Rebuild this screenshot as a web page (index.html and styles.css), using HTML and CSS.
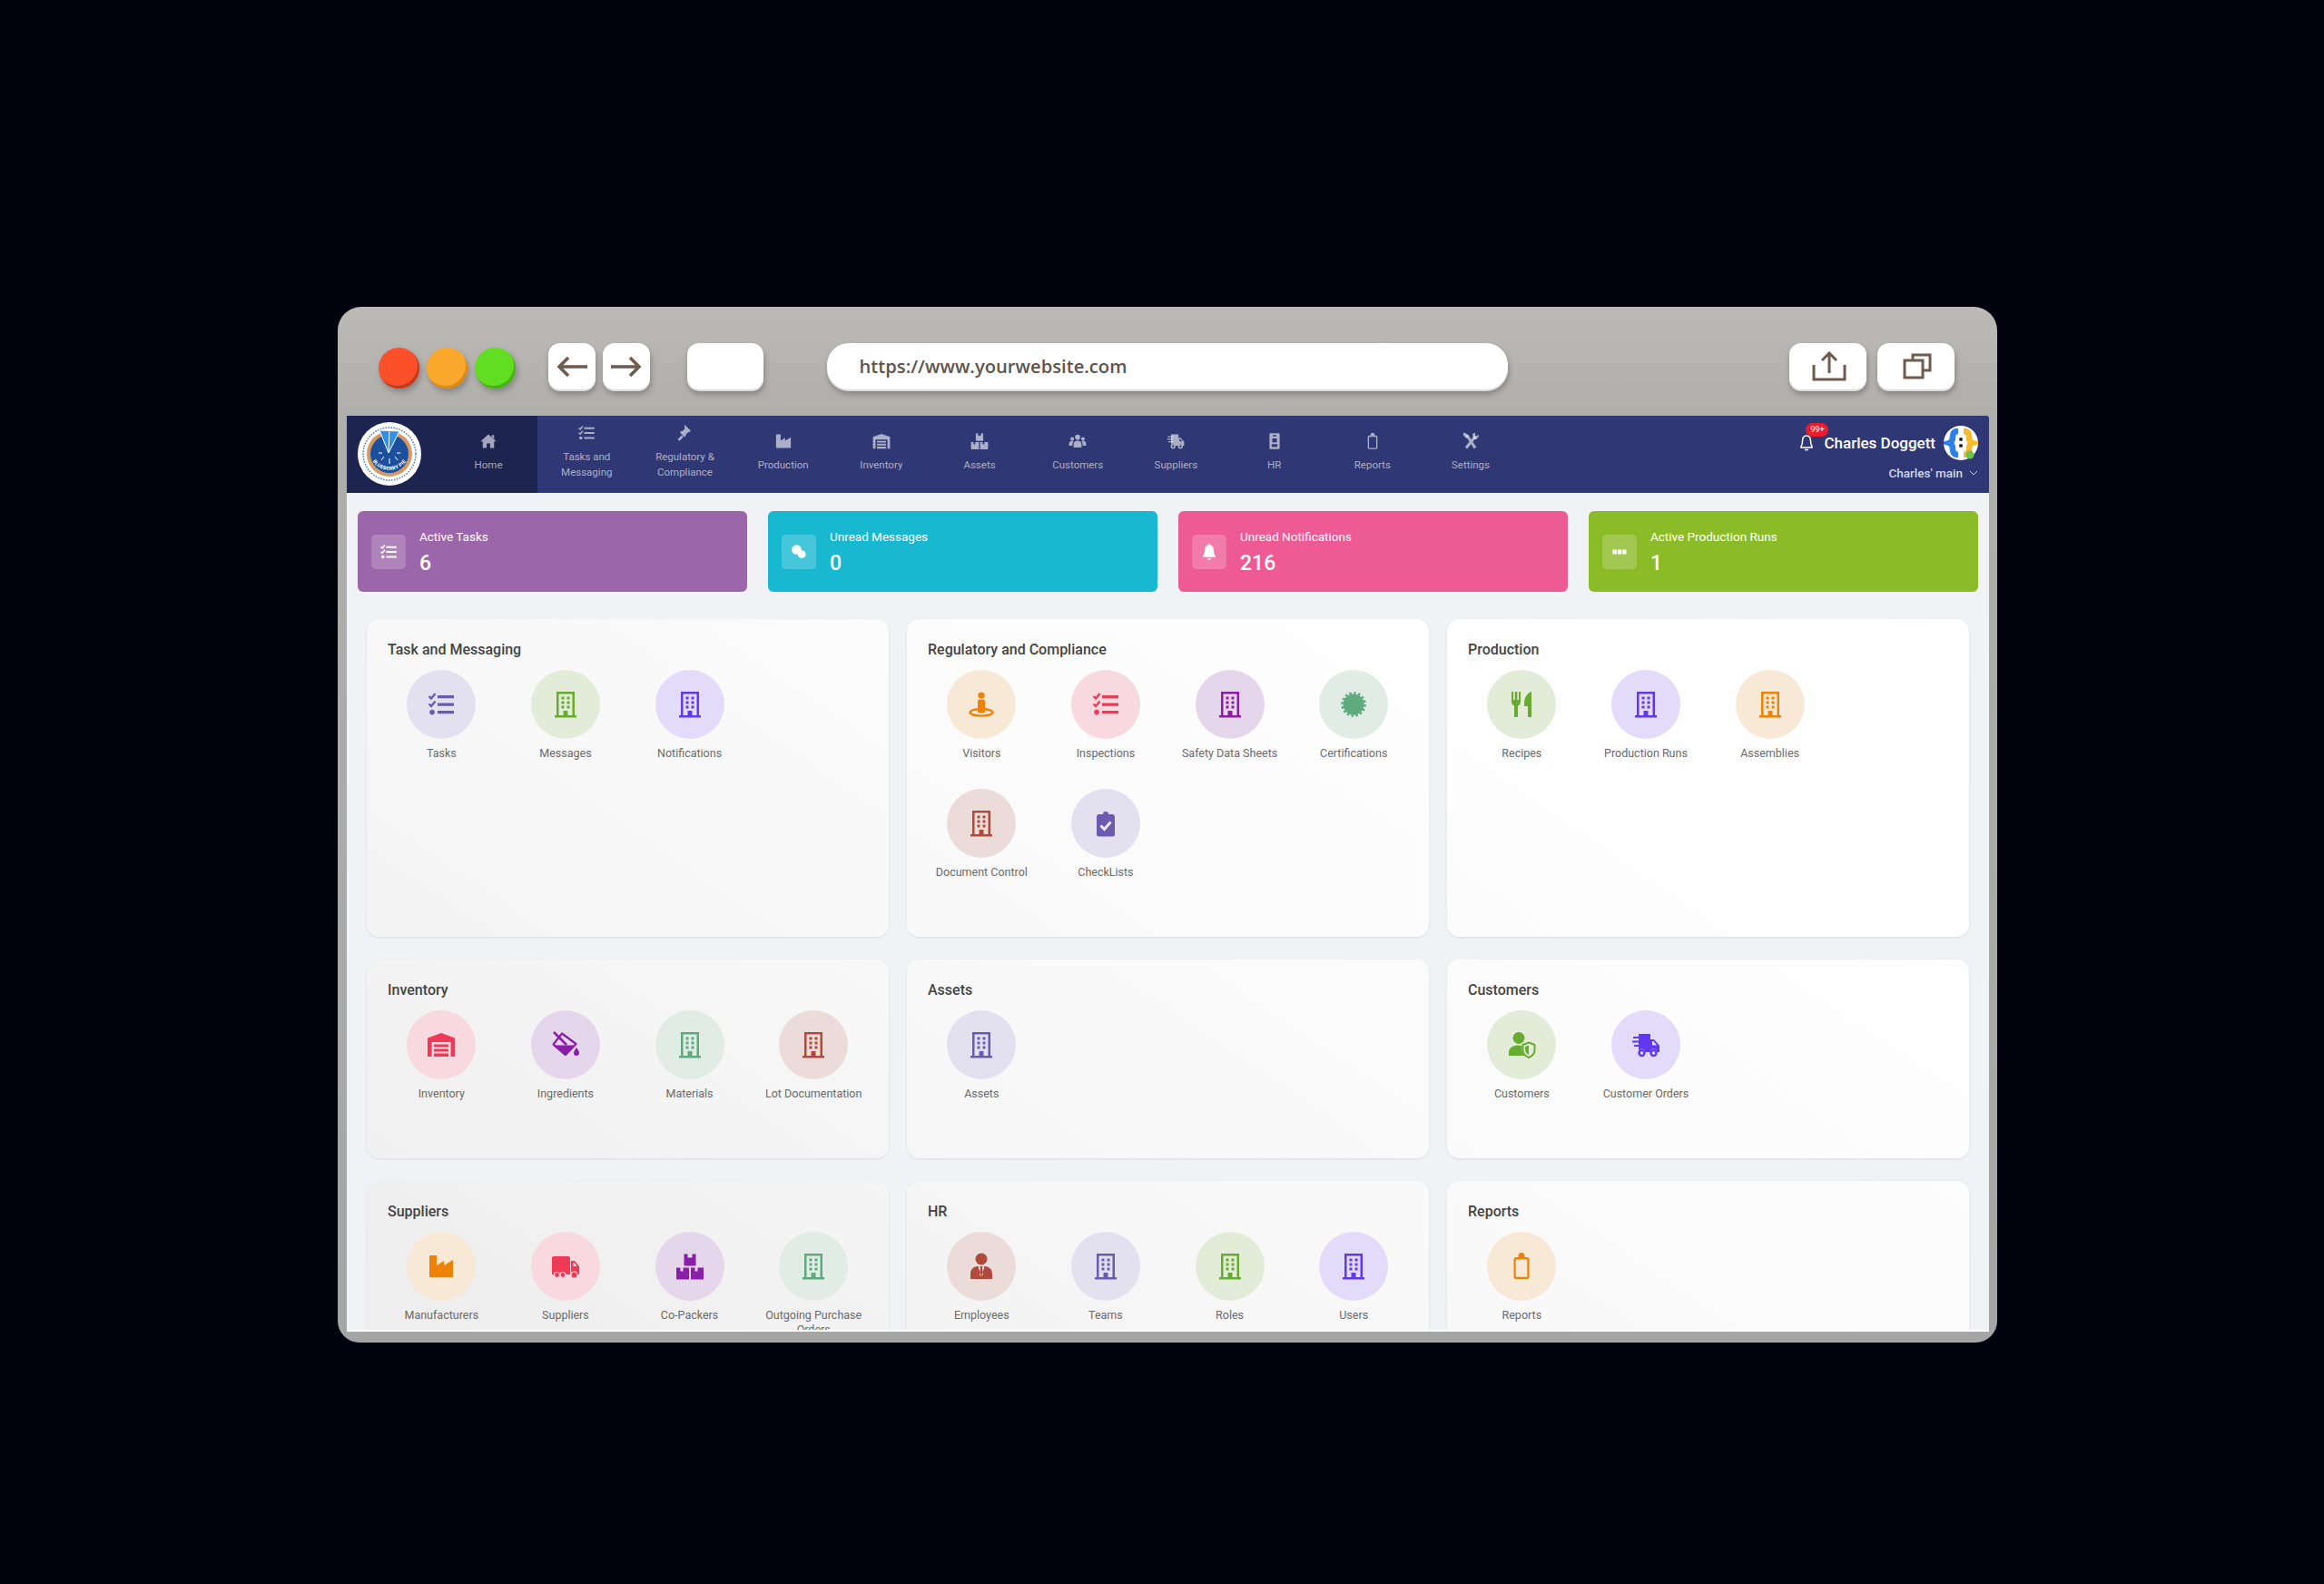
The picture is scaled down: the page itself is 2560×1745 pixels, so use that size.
FILE: index.html
```html
<!DOCTYPE html>
<html lang="en">
<head>
  <meta charset="UTF-8" />
  <meta name="viewport" content="width=device-width, initial-scale=1.0" />
  <title>Dashboard</title>
  <link rel="stylesheet" href="styles.css">
</head>
<body>
  <!-- shared icons -->
  <svg class="icon-defs" xmlns="http://www.w3.org/2000/svg">
    <symbol id="i-building" viewBox="0 0 32 32"><path fill="currentColor" fill-rule="evenodd" d="M6 2h20v26h2v2.5H4V28h2zM8.5 4.5V28h5v-5h5v5h5V4.500zM11.5 7.500h3v3h-3zM17.5 7.500h3v3h-3zM11.5 12.500h3v3h-3zM17.5 12.500h3v3h-3zM11.5 17.500h3v3h-3zM17.5 17.500h3v3h-3z"/></symbol>
    <symbol id="i-list" viewBox="0 0 32 32"><path fill="currentColor" d="M12 6h18v3.200H12zM12 14.500h18v3.200H12zM12 23h18v3.200H12z"/><circle fill="currentColor" cx="6" cy="24.600" r="2.800"/><path fill="none" stroke="currentColor" stroke-width="2.400" d="M2.500 7l2.500 2.500 4.500-5.500M2.500 15.500L5 18l4.500-5.500"/></symbol>
    <symbol id="i-visitor" viewBox="0 0 32 32"><circle fill="currentColor" cx="16" cy="6" r="3.600"/><rect fill="currentColor" x="12" y="10.500" width="8" height="15" rx="2"/><ellipse fill="none" stroke="currentColor" stroke-width="2.400" cx="16" cy="24.800" rx="12.500" ry="3.800"/></symbol>
    <symbol id="i-cert" viewBox="0 0 32 32"><circle fill="currentColor" cx="16" cy="16" r="11.500"/><circle fill="none" stroke="currentColor" stroke-width="2.600" stroke-dasharray="2.450 2.450" cx="16" cy="16" r="12.500"/></symbol>
    <symbol id="i-warehouse" viewBox="0 0 32 32"><path fill="currentColor" d="M16 3l15 5.500V29h-4.500V13h-21v16H1V8.500zM8 15.500h16v3H8zM8 20.500h16v3H8zM8 25.500h16V29H8z"/></symbol>
    <symbol id="i-bucket" viewBox="0 0 32 32"><path fill="none" stroke="currentColor" stroke-width="2.600" d="M3 2l14 14"/><path fill="none" stroke="currentColor" stroke-width="2.200" stroke-linejoin="round" d="M12 3.500l15.500 11.500L16 27 2.500 15.500z"/><path fill="currentColor" d="M2 16.500h24L17 27q-1.500 1-3 0z"/><path fill="currentColor" d="M28 19c2 3 3 4.500 3 6a3 3 0 01-6 0c0-1.500 1-3 3-6z"/></symbol>
    <symbol id="i-boxes" viewBox="0 0 32 32"><path fill="currentColor" d="M9.500 2.500h4v4h5v-4h4v13h-13zM1 17.500h4.500v4h3v-4H15v13H1zM17 17.500h4.500v4h3v-4H31v13H17z"/></symbol>
    <symbol id="i-factory" viewBox="0 0 32 32"><path fill="currentColor" d="M3 4h8v11l8-5v5l10-6v19H3z"/></symbol>
    <symbol id="i-truck" viewBox="0 0 32 32"><path fill="currentColor" fill-rule="evenodd" d="M1 7a2 2 0 012-2h16a2 2 0 012 2v18H1zM22 10h4l5 6v9H22zM24.500 12v4h4l-3-4z"/><g fill="currentColor" stroke="#f2d6dc" stroke-width="1.200"><circle cx="6.500" cy="25.500" r="3"/><circle cx="13" cy="25.500" r="3"/><circle cx="25.500" cy="25.500" r="3.500"/></g></symbol>
    <symbol id="i-fasttruck" viewBox="0 0 32 32"><path fill="currentColor" fill-rule="evenodd" d="M8 4h13v6h4l6 7v7h-3a3.500 3.500 0 00-7 0h-6a3.500 3.500 0 00-7 0H8zM23 12v4.500h5l-3.500-4.500z"/><path fill="none" stroke="currentColor" stroke-width="2" d="M2 8h10M1 12.500h10M3 17h8"/><circle fill="none" stroke="currentColor" stroke-width="2.400" cx="11.500" cy="25" r="3"/><circle fill="none" stroke="currentColor" stroke-width="2.400" cx="24.500" cy="25" r="3"/></symbol>
    <symbol id="i-usershield" viewBox="0 0 32 32"><circle fill="currentColor" cx="13" cy="8.500" r="6.500"/><path fill="currentColor" d="M2 28v-4c0-5 5-7.500 11-7.500 1.500 0 2.700.2 3.500.5v5c0 2.500 1 4.500 2.500 6z"/><path fill="none" stroke="currentColor" stroke-width="2" d="M24 13.500l6.500 2.500v6c0 4-3 6.500-6.500 8-3.500-1.500-6.500-4-6.500-8v-6z"/><path fill="currentColor" d="M24 16.500v10.500c-2-1-4-2.800-4-5.500v-3.500z"/></symbol>
    <symbol id="i-employee" viewBox="0 0 32 32"><circle fill="currentColor" cx="16" cy="8" r="6.500"/><path fill="currentColor" fill-rule="evenodd" d="M4 30v-6c0-5 4-8 8-8h8c4 0 8 3 8 8v6zM12.500 16l3.500 12 3.500-12h-1.800l-.7 2 1 7-2 2.500-2-2.500 1-7-.7-2z"/></symbol>
    <symbol id="i-clipcheck" viewBox="0 0 32 32"><path fill="currentColor" d="M9 6h4a3 3 0 016 0h4a3 3 0 013 3v19a2.500 2.500 0 01-2.500 2.500h-15A2.500 2.500 0 016 28V9a3 3 0 013-3z"/><path fill="none" stroke="#ece9f6" stroke-width="3" d="M10.500 18.500l4 4 7-8"/></symbol>
    <symbol id="i-clipboard" viewBox="0 0 32 32"><path fill="currentColor" fill-rule="evenodd" d="M10 6h2.500V4.500a3.500 3.500 0 017 0V6H22a2.500 2.500 0 012.500 2.500v19A2.500 2.500 0 0122 30H10a2.500 2.500 0 01-2.500-2.500v-19A2.500 2.500 0 0110 6zM9.700 8.500v19.300h12.600V8.500z"/></symbol>
    <symbol id="i-recipes" viewBox="0 0 32 32"><path fill="currentColor" d="M5 2v11c0 3 2 4 3 4.500V30h4V17.500c1-.5 3-1.500 3-4.500V2h-2v9h-1.700V2h-2.600v9H7V2zM19 15C19 8 23 3 27 2v28h-4V18h-4z"/></symbol>
    <symbol id="i-home" viewBox="0 0 32 32"><path fill="currentColor" d="M16 4l14 12.500h-4V28h-7v-8h-6v8H6V16.500H2zM22 5h4v7l-4-3.500z"/></symbol>
    <symbol id="i-gavel" viewBox="0 0 32 32"><path fill="currentColor" d="M16 1l11 11-3 3-1-1-5 5 1 1-3 3-8-8 3-3 1 1 5-5-1-1zM11 20l3 3-7 7-3-3z"/></symbol>
    <symbol id="i-users" viewBox="0 0 32 32"><g fill="currentColor"><circle cx="16" cy="9" r="4.500"/><circle cx="6.500" cy="12" r="3.200"/><circle cx="25.500" cy="12" r="3.200"/><path d="M9 27v-5c0-5 3-7 7-7s7 2 7 7v5zM1 24v-4c0-3 2-4.500 5-4.500 1 0 2 .2 3 .8-1.500 1.500-2 3.500-2 7.700zM31 24v-4c0-3-2-4.500-5-4.500-1 0-2 .2-3 .8 1.500 1.500 2 3.500 2 7.700z"/></g></symbol>
    <symbol id="i-badge" viewBox="0 0 32 32"><path fill="currentColor" fill-rule="evenodd" d="M9 2h14a2 2 0 012 2v24a2 2 0 01-2 2H9a2 2 0 01-2-2V4a2 2 0 012-2zM13 5v2.500h6V5zM12 11v7h8v-7zM11 21v5h10v-5z"/></symbol>
    <symbol id="i-tools" viewBox="0 0 32 32"><path fill="none" stroke="currentColor" stroke-width="5" d="M9 5l15 23M24 8L8 28"/><path fill="currentColor" d="M19 3l5-2v5l3 1 3-3v4l-4 5-5-1zM3 1l5 1 4 6-4 3-5-6z"/></symbol>
    <symbol id="i-chat" viewBox="0 0 32 32"><circle fill="currentColor" cx="12" cy="12" r="8.500"/><circle fill="currentColor" cx="21" cy="20" r="7"/></symbol>
    <symbol id="i-bell" viewBox="0 0 32 32"><path fill="currentColor" d="M16 2a2.500 2.500 0 012.500 2.500C23 5.500 24 10 24 14.500c0 5 2 7.500 3 8.500v2H5v-2c1-1 3-3.500 3-8.500C8 10 9 5.500 13.500 4.500A2.500 2.500 0 0116 2zM13 27h6a3 3 0 01-6 0z"/></symbol>
    <symbol id="i-runs" viewBox="0 0 32 32"><path fill="currentColor" d="M4 12h7v8H4zM12.500 12h7v8h-7zM21 12h7v8h-7z"/></symbol>
  </svg>

  <div class="browser">
    <div class="chrome">
      <div class="lights">
        <span class="light light-red"></span>
        <span class="light light-orange"></span>
        <span class="light light-green"></span>
      </div>
      <div class="arrows">
        <button class="key key-arrow">
          <svg width="34" height="24" viewBox="0 0 34 24"><path fill="none" stroke="#6e5a4e" stroke-width="3.500" d="M34 12H3M13 2L3 12l10 10"/></svg>
        </button>
        <button class="key key-arrow">
          <svg width="34" height="24" viewBox="0 0 34 24"><path fill="none" stroke="#6e5a4e" stroke-width="3.500" d="M0 12h31M21 2l10 10-10 10"/></svg>
        </button>
      </div>
      <button class="key key-blank"></button>
      <div class="key url">https://www.yourwebsite.com</div>
      <div class="actions">
        <button class="key key-action">
          <svg width="38" height="33" viewBox="0 0 38 33"><path fill="none" stroke="#6e5a4e" stroke-width="3" d="M19 24V3M11 10l8-8 8 8M2 15v16h34V15"/></svg>
        </button>
        <button class="key key-action">
          <svg width="32" height="29" viewBox="0 0 32 29"><path fill="none" stroke="#6e5a4e" stroke-width="3" d="M11 8V2h19v17h-8M2 8h20v19H2z"/></svg>
        </button>
      </div>
    </div>

    <div class="app">
      <header class="topnav">
        <div class="brand">
          <svg class="logo" width="70" height="70" viewBox="0 0 70 70">
            <circle cx="35" cy="35" r="35" fill="#fff"/>
            <circle cx="35" cy="35" r="29" fill="none" stroke="#4a76b4" stroke-width="1.500" stroke-dasharray="1.500 1.500"/>
            <circle cx="35" cy="35" r="25" fill="#d49a62"/>
            <circle cx="35" cy="35" r="21" fill="#1c4f9e"/>
            <path fill="#2f90e6" stroke="#fff" d="M34 34L24 9l22 1z"/>
            <path fill="none" stroke="#fff" stroke-width="1" d="M34 34L35 10M35 40v6M29 38l-3 4M41 38l3 4M27 34h-4M43 34h4"/>
            <defs><path id="logo-arc" d="M13 31a22 22 0 0044 0"/></defs>
            <text class="logo-text"><textPath href="#logo-arc" startOffset="50%" text-anchor="middle">BLUEBERRY PIE</textPath></text>
          </svg>
        </div>
        <nav class="menu">
          <a class="menu-item active"><svg class="menu-icon"><use href="#i-home"/></svg><span>Home</span></a>
          <a class="menu-item"><svg class="menu-icon"><use href="#i-list"/></svg><span>Tasks and Messaging</span></a>
          <a class="menu-item"><svg class="menu-icon"><use href="#i-gavel"/></svg><span>Regulatory &amp; Compliance</span></a>
          <a class="menu-item"><svg class="menu-icon"><use href="#i-factory"/></svg><span>Production</span></a>
          <a class="menu-item"><svg class="menu-icon"><use href="#i-warehouse"/></svg><span>Inventory</span></a>
          <a class="menu-item"><svg class="menu-icon"><use href="#i-boxes"/></svg><span>Assets</span></a>
          <a class="menu-item"><svg class="menu-icon"><use href="#i-users"/></svg><span>Customers</span></a>
          <a class="menu-item"><svg class="menu-icon"><use href="#i-fasttruck"/></svg><span>Suppliers</span></a>
          <a class="menu-item"><svg class="menu-icon"><use href="#i-badge"/></svg><span>HR</span></a>
          <a class="menu-item"><svg class="menu-icon"><use href="#i-clipboard"/></svg><span>Reports</span></a>
          <a class="menu-item"><svg class="menu-icon"><use href="#i-tools"/></svg><span>Settings</span></a>
        </nav>
        <div class="user">
          <div class="user-row">
            <div class="bell">
              <svg width="14" height="20" viewBox="0 0 14 20"><path fill="none" stroke="#fff" stroke-width="1.500" d="M7 2c3.500 0 4.500 3 4.500 6 0 3.500 1 5 1.500 6v1H1v-1c.5-1 1.500-2.500 1.500-6C2.500 5 3.500 2 7 2zM5 17.500h4"/></svg>
              <span class="badge">99+</span>
            </div>
            <span class="user-name">Charles Doggett</span>
            <svg class="avatar" width="38" height="38" viewBox="0 0 38 38">
              <circle cx="19" cy="19" r="19" fill="#fff"/>
              <path fill="none" stroke="#2f7fe8" stroke-width="6.500" d="M16 6c-5 0-6 3-6 6 0 4-1 6-4 7 3 1 4 3 4 7 0 3 1 6 6 6"/>
              <path fill="none" stroke="#f7bb2f" stroke-width="6.500" d="M22 6c5 0 6 3 6 6 0 4 1 6 4 7-3 1-4 3-4 7 0 3-1 6-6 6"/>
              <circle cx="19" cy="15" r="2" fill="#222"/>
              <circle cx="19" cy="22" r="2" fill="#222"/>
              <circle cx="29" cy="32" r="4.500" fill="#6cc24a"/>
            </svg>
          </div>
          <div class="user-sub">
            Charles' main
            <svg width="10" height="6" viewBox="0 0 10 6"><path fill="none" stroke="#c5c9de" d="M1 1l4 4 4-4"/></svg>
          </div>
        </div>
      </header>

      <section class="stats">
        <div class="stat stat-purple">
          <div class="stat-icon"><svg><use href="#i-list"/></svg></div>
          <div class="stat-text"><div class="stat-label">Active Tasks</div><div class="stat-value">6</div></div>
        </div>
        <div class="stat stat-teal">
          <div class="stat-icon"><svg><use href="#i-chat"/></svg></div>
          <div class="stat-text"><div class="stat-label">Unread Messages</div><div class="stat-value">0</div></div>
        </div>
        <div class="stat stat-pink">
          <div class="stat-icon"><svg><use href="#i-bell"/></svg></div>
          <div class="stat-text"><div class="stat-label">Unread Notifications</div><div class="stat-value">216</div></div>
        </div>
        <div class="stat stat-green">
          <div class="stat-icon"><svg><use href="#i-runs"/></svg></div>
          <div class="stat-text"><div class="stat-label">Active Production Runs</div><div class="stat-value">1</div></div>
        </div>
      </section>

      <main class="panels">
        <section class="panel">
          <h3 class="panel-title">Task and Messaging</h3>
          <div class="tiles">
            <a class="tile"><span class="circle c-indigo"><svg><use href="#i-list"/></svg></span><span class="tile-label">Tasks</span></a>
            <a class="tile"><span class="circle c-green"><svg><use href="#i-building"/></svg></span><span class="tile-label">Messages</span></a>
            <a class="tile"><span class="circle c-violet"><svg><use href="#i-building"/></svg></span><span class="tile-label">Notifications</span></a>
          </div>
        </section>

        <section class="panel">
          <h3 class="panel-title">Regulatory and Compliance</h3>
          <div class="tiles">
            <a class="tile"><span class="circle c-orange"><svg><use href="#i-visitor"/></svg></span><span class="tile-label">Visitors</span></a>
            <a class="tile"><span class="circle c-red"><svg><use href="#i-list"/></svg></span><span class="tile-label">Inspections</span></a>
            <a class="tile"><span class="circle c-purple"><svg><use href="#i-building"/></svg></span><span class="tile-label">Safety Data Sheets</span></a>
            <a class="tile"><span class="circle c-teal"><svg><use href="#i-cert"/></svg></span><span class="tile-label">Certifications</span></a>
            <a class="tile"><span class="circle c-brown"><svg><use href="#i-building"/></svg></span><span class="tile-label">Document Control</span></a>
            <a class="tile"><span class="circle c-indigo"><svg><use href="#i-clipcheck"/></svg></span><span class="tile-label">CheckLists</span></a>
          </div>
        </section>

        <section class="panel">
          <h3 class="panel-title">Production</h3>
          <div class="tiles">
            <a class="tile"><span class="circle c-green"><svg><use href="#i-recipes"/></svg></span><span class="tile-label">Recipes</span></a>
            <a class="tile"><span class="circle c-violet"><svg><use href="#i-building"/></svg></span><span class="tile-label">Production Runs</span></a>
            <a class="tile"><span class="circle c-orange"><svg><use href="#i-building"/></svg></span><span class="tile-label">Assemblies</span></a>
          </div>
        </section>

        <section class="panel">
          <h3 class="panel-title">Inventory</h3>
          <div class="tiles">
            <a class="tile"><span class="circle c-red"><svg><use href="#i-warehouse"/></svg></span><span class="tile-label">Inventory</span></a>
            <a class="tile"><span class="circle c-purple"><svg><use href="#i-bucket"/></svg></span><span class="tile-label">Ingredients</span></a>
            <a class="tile"><span class="circle c-teal"><svg><use href="#i-building"/></svg></span><span class="tile-label">Materials</span></a>
            <a class="tile"><span class="circle c-brown"><svg><use href="#i-building"/></svg></span><span class="tile-label">Lot Documentation</span></a>
          </div>
        </section>

        <section class="panel">
          <h3 class="panel-title">Assets</h3>
          <div class="tiles">
            <a class="tile"><span class="circle c-indigo"><svg><use href="#i-building"/></svg></span><span class="tile-label">Assets</span></a>
          </div>
        </section>

        <section class="panel">
          <h3 class="panel-title">Customers</h3>
          <div class="tiles">
            <a class="tile"><span class="circle c-green"><svg><use href="#i-usershield"/></svg></span><span class="tile-label">Customers</span></a>
            <a class="tile"><span class="circle c-violet"><svg><use href="#i-fasttruck"/></svg></span><span class="tile-label">Customer Orders</span></a>
          </div>
        </section>

        <section class="panel">
          <h3 class="panel-title">Suppliers</h3>
          <div class="tiles">
            <a class="tile"><span class="circle c-orange"><svg><use href="#i-factory"/></svg></span><span class="tile-label">Manufacturers</span></a>
            <a class="tile"><span class="circle c-red"><svg><use href="#i-truck"/></svg></span><span class="tile-label">Suppliers</span></a>
            <a class="tile"><span class="circle c-purple"><svg><use href="#i-boxes"/></svg></span><span class="tile-label">Co-Packers</span></a>
            <a class="tile"><span class="circle c-teal"><svg><use href="#i-building"/></svg></span><span class="tile-label">Outgoing Purchase Orders</span></a>
          </div>
        </section>

        <section class="panel">
          <h3 class="panel-title">HR</h3>
          <div class="tiles">
            <a class="tile"><span class="circle c-brown"><svg><use href="#i-employee"/></svg></span><span class="tile-label">Employees</span></a>
            <a class="tile"><span class="circle c-indigo"><svg><use href="#i-building"/></svg></span><span class="tile-label">Teams</span></a>
            <a class="tile"><span class="circle c-green"><svg><use href="#i-building"/></svg></span><span class="tile-label">Roles</span></a>
            <a class="tile"><span class="circle c-violet"><svg><use href="#i-building"/></svg></span><span class="tile-label">Users</span></a>
          </div>
        </section>

        <section class="panel">
          <h3 class="panel-title">Reports</h3>
          <div class="tiles">
            <a class="tile"><span class="circle c-orange"><svg><use href="#i-clipboard"/></svg></span><span class="tile-label">Reports</span></a>
          </div>
        </section>
      </main>
    </div>
  </div>
</body>
</html>
```
FILE: styles.css
```css
* {
  box-sizing: border-box;
}

body {
  margin: 0;
  padding: 338px 0 0 372px;
  height: 100vh;
  overflow: hidden;
  background-color: #02020e;
  font-family: Roboto, "Liberation Sans", sans-serif;
}

.icon-defs {
  display: none;
}

/* browser frame */
.browser {
  width: 1828px;
  height: 1141px;
  padding: 0 9px 12px 9.5px;
  border-radius: 26px 26px 24px 24px;
  background: linear-gradient(#bcbab7, #afaeab 120px, #a5a5a5);
  display: flex;
  flex-direction: column;
}

.chrome {
  height: 120px;
  flex-shrink: 0;
  display: flex;
  align-items: flex-start;
  padding: 40px 0 0 35px;
}

.lights {
  display: flex;
  gap: 8px;
  margin-top: 4.5px;
}

.light {
  width: 45px;
  height: 45px;
  border-radius: 50%;
}

.light-red {
  background-color: #fb5029;
  box-shadow: inset -2px -3px 0 #c9361a, 2px 4px 6px rgba(0,0,0,0.25);
}

.light-orange {
  background-color: #fba92c;
  box-shadow: inset -2px -3px 0 #dc8a16, 2px 4px 6px rgba(0,0,0,0.25);
}

.light-green {
  background-color: #62de22;
  box-shadow: inset -2px -3px 0 #43b50f, 2px 4px 6px rgba(0,0,0,0.25);
}

.key {
  height: 51px;
  padding: 0;
  border: none;
  background-color: #fff;
  border-radius: 13px;
  box-shadow: 0 2px 0 #dedddb, 1px 5px 6px rgba(0,0,0,0.28);
}

.arrows {
  display: flex;
  gap: 8px;
  margin-left: 36px;
}

.key-arrow {
  width: 52px;
  display: flex;
  align-items: center;
  justify-content: center;
}

.key-blank {
  width: 84px;
  margin-left: 41px;
}

.url {
  width: 750px;
  margin-left: 70px;
  padding-left: 36px;
  border-radius: 24px;
  line-height: 50px;
  color: #5c5550;
  font-family: "Open Sans", sans-serif;
  font-size: 20.2px;
  font-weight: 600;
}

.actions {
  display: flex;
  gap: 12px;
  margin-left: 310px;
}

.key-action {
  width: 85px;
  padding-left: 4px;
  display: flex;
  align-items: center;
  justify-content: center;
}

/* app */
.app {
  flex: 1;
  min-height: 0;
  overflow: hidden;
  background-color: #f0f2f5;
  border-bottom: 2px solid #fbfbfb;
}

.topnav {
  height: 85px;
  display: flex;
  background-color: #2f3874;
  border-radius: 2px 2px 0 0;
}

.brand {
  width: 102.5px;
  padding: 7px 0 0 12.5px;
  background-color: #1d2450;
}

.logo-text {
  fill: #fff;
  font-size: 5.5px;
  font-weight: 700;
  letter-spacing: 0.3px;
}

.menu {
  display: flex;
}

.menu-item {
  width: 108.2px;
  padding: 0 14px 5px;
  display: flex;
  flex-direction: column;
  align-items: center;
  justify-content: center;
  gap: 8px;
  color: rgba(255,255,255,0.6);
  font-size: 11.5px;
  line-height: 17px;
  text-align: center;
}

.menu-item.active {
  background-color: #1d2450;
}

.menu-icon {
  width: 20px;
  height: 20px;
}

.user {
  margin-left: auto;
  padding: 11px 12px 0 0;
  display: flex;
  flex-direction: column;
  align-items: flex-end;
  color: #fff;
}

.user-row {
  display: flex;
  align-items: center;
}

.bell {
  position: relative;
  height: 20px;
  margin-right: 12px;
}

.badge {
  position: absolute;
  left: 6px;
  top: -12px;
  width: 25px;
  height: 15px;
  border-radius: 8px;
  background-color: #ec1c2d;
  font-size: 9px;
  line-height: 15px;
  text-align: center;
}

.user-name {
  font-size: 17px;
  font-weight: 500;
  margin-right: 9px;
}

.user-sub {
  margin-top: 6px;
  display: flex;
  align-items: center;
  gap: 7px;
  color: #d4d7e6;
  font-size: 13.5px;
  font-weight: 500;
  line-height: 16px;
}

/* coloured stat cards */
.stats {
  display: grid;
  grid-template-columns: repeat(4, 1fr);
  gap: 23px;
  padding: 20px 12px 0 12.5px;
}

.stat {
  height: 89px;
  padding-left: 15px;
  display: flex;
  align-items: center;
  gap: 15px;
  border-radius: 6px;
  color: #fff;
}

.stat-purple { background-color: #9c66aa; }
.stat-teal { background-color: #17b8d0; }
.stat-pink { background-color: #ee5a94; }
.stat-green { background-color: #8bbb27; }

.stat-icon {
  width: 38px;
  height: 38px;
  display: flex;
  align-items: center;
  justify-content: center;
  border-radius: 5px;
  background-color: rgba(255,255,255,0.2);
}

.stat-icon svg {
  width: 20px;
  height: 20px;
}

.stat-text {
  margin-top: 2px;
}

.stat-label {
  font-size: 13.5px;
  line-height: 18px;
  margin-bottom: 6px;
}

.stat-value {
  font-size: 23px;
  font-weight: 500;
  line-height: 30px;
}

/* section panels */
.panels {
  display: grid;
  grid-template-columns: repeat(3, 1fr);
  column-gap: 20.5px;
  row-gap: 25px;
  padding: 30px 22.5px 0;
}

.panel {
  padding: 24px 14px 32px;
  border-radius: 14px;
  background: linear-gradient(to top right, #eeeeee 18%, #f8f8f8 38%, #fdfdfd 55%, #fff 72%) fixed;
  box-shadow: 0 1px 3px rgba(0,0,0,0.09);
}

.panel-title {
  margin: 0 0 12px 9px;
  color: #444;
  font-size: 16px;
  font-weight: 500;
  line-height: 20px;
}

.tiles {
  display: grid;
  grid-template-columns: repeat(4, 1fr);
}

.tile {
  height: 131px;
  padding: 0 8px;
  display: flex;
  flex-direction: column;
  align-items: center;
  text-align: center;
}

.circle {
  width: 76px;
  height: 76px;
  flex-shrink: 0;
  display: flex;
  align-items: center;
  justify-content: center;
  border-radius: 50%;
}

.circle svg {
  width: 32px;
  height: 32px;
}

.tile-label {
  margin-top: 8px;
  color: #6a6a6a;
  font-size: 12.5px;
  line-height: 16px;
}

.c-indigo { background-color: #e3e1f0; color: #6a5bb0; }
.c-green { background-color: #e3ecd8; color: #67ab2f; }
.c-violet { background-color: #e2dcfa; color: #6138f0; }
.c-orange { background-color: #f8e8d6; color: #ef8206; }
.c-red { background-color: #f7d9df; color: #ee3a57; }
.c-purple { background-color: #e6d6ec; color: #8a1ea6; }
.c-teal { background-color: #e0ece5; color: #5fab7e; }
.c-brown { background-color: #ebdcda; color: #b04a3b; }
```
